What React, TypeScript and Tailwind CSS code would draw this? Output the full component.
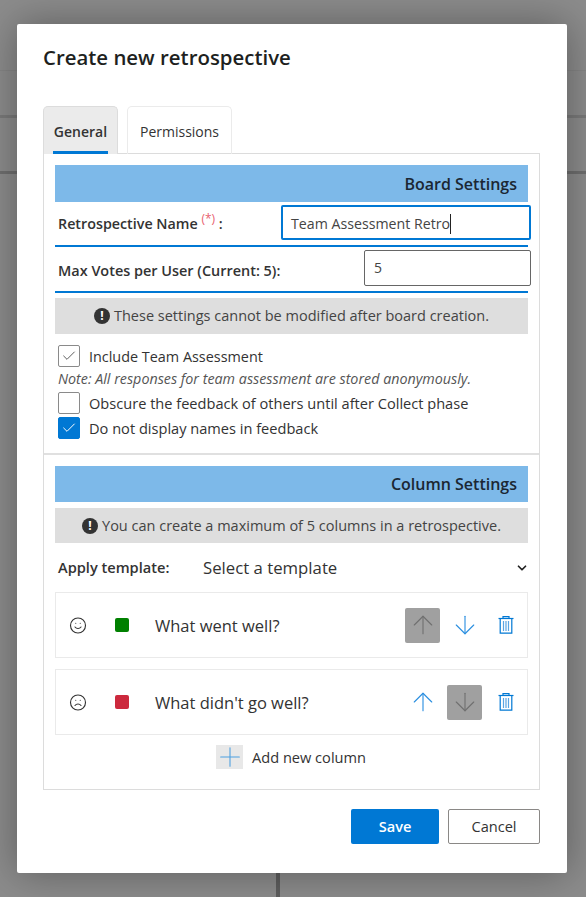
import React from 'react';
import { ArrowUp, ArrowDown, Check, Plus, ChevronDown, Smile, Frown } from 'lucide-react';

// Screenshot reference uses Segoe UI, Open Sans is the nearest installed family
const fontClass = "font-['Open_Sans','Noto_Sans',sans-serif]";

function SectionHeader({ title, heightClass }: { title: string; heightClass: string }) {
    return (
        <div className={`${heightClass} bg-[#7db9e9] flex items-center justify-end pr-[11px] text-[16px] font-semibold text-[#1b2733]`}>
            {title}
        </div>
    );
}

function InfoBar({ text, heightClass, textClass }: { text: string; heightClass: string; textClass?: string }) {
    return (
        <div className={`${heightClass} bg-[#dedede] flex items-center justify-center gap-[4px] text-[14.5px] text-[#444]`}>
            <span className="w-[16px] h-[16px] rounded-full bg-[#333] text-white text-[12px] font-bold flex items-center justify-center leading-none">!</span>
            <span className={textClass}>{text}</span>
        </div>
    );
}

function CheckBox({ state }: { state: 'off' | 'on' | 'outline' }) {
    const base = 'w-[22px] h-[22px] rounded-[2px] flex items-center justify-center border shrink-0';
    if (state === 'on') {
        return <span className={`${base} bg-[#0078d4] border-[#0078d4]`}><Check size={16} strokeWidth={1.5} color="#fff" /></span>;
    }
    return (
        <span className={`${base} bg-white border-[#8a8a8a]`}>
            {state === 'outline' && <Check size={16} strokeWidth={1.2} color="#333" />}
        </span>
    );
}

function TrashIcon() {
    return (
        <svg width="20" height="20" viewBox="0 0 20 20" fill="none" stroke="#0078d4" strokeWidth="1.2">
            <path d="M2.5 3.5H17.5" />
            <path d="M7 3.5V1.6H13V3.5" />
            <path d="M4.2 3.5V18.2H15.8V3.5" />
            <path d="M7.5 6V16M10 6V16M12.5 6V16" stroke="#5aa5e3" />
        </svg>
    );
}

function ColumnRow({ icon, color, label, upDisabled }: { icon: React.ReactNode; color: string; label: string; upDisabled: boolean }) {
    return (
        <div className="h-[66px] border border-[#eaeaea] flex items-center">
            <span className="ml-[13px] w-[18px] flex justify-center">{icon}</span>
            <span className="ml-[28px] w-[14px] h-[14px] rounded-[2px]" style={{ backgroundColor: color }} />
            <span className="ml-[26px] pt-[2px] text-[16.5px] text-[#333] flex-1">{label}</span>
            <div className="flex items-center mr-[4px]">
                <span className={`w-[35px] h-[35px] flex items-center justify-center rounded-[2px] ${upDisabled ? 'bg-[#a0a0a0] text-[#707070]' : 'text-[#2b8fe0]'}`}>
                    <ArrowUp size={30} strokeWidth={0.9} />
                </span>
                <span className={`ml-[7px] w-[35px] h-[35px] flex items-center justify-center rounded-[2px] ${upDisabled ? 'text-[#2b8fe0]' : 'bg-[#a0a0a0] text-[#707070]'}`}>
                    <ArrowDown size={30} strokeWidth={0.9} />
                </span>
                <span className="ml-[6px] w-[35px] h-[35px] flex items-center justify-center">
                    <TrashIcon />
                </span>
            </div>
        </div>
    );
}

export default function App() {
    return (
        <div className={`relative w-[586px] h-[897px] overflow-hidden bg-[#8c8c8c] ${fontClass}`}>
            <div className="absolute left-0 right-0 top-[70px] h-px bg-[#858585]" />
            <div className="absolute left-0 right-0 top-[115px] h-[3px] bg-[#7a7a7a]" />
            <div className="absolute left-0 right-0 top-[171px] h-[3px] bg-[#6f6f6f]" />
            <div className="absolute left-[276px] bottom-0 h-[30px] w-[4px] bg-[#5e5e5e]" />
            <div className="absolute left-[17px] top-[24px] w-[550px] h-[849px] bg-white rounded-[2px] shadow-[0_0_40px_rgba(0,0,0,0.35)] pl-[26px] pr-[27px] flex flex-col">
                <h1 className="mt-[18px] h-[30px] text-[20.4px] font-semibold text-[#201f1e] flex items-center">Create new retrospective</h1>

                <div className="relative mt-[34px] -mb-px flex gap-[9px] h-[48px] text-[14px]">
                    <div className="relative w-[75px] pt-[2px] bg-[#ebebeb] border border-b-0 border-[#dcdcdc] rounded-t-[5px] flex items-center justify-center font-semibold text-[#333]">
                        General
                        <span className="absolute left-[9px] right-[9px] bottom-0 h-[3px] bg-[#0078d4]" />
                    </div>
                    <div className="w-[105px] pt-[2px] border border-b-0 border-[#ebebeb] rounded-t-[5px] flex items-center justify-center text-[#333]">Permissions</div>
                </div>

                <div className="border border-[#dcdcdc] h-[637px] flex flex-col">
                    <div className="px-[11px] pt-[11px] h-[301px] border-b-2 border-[#e0e0e0] shrink-0">
                        <SectionHeader title="Board Settings" heightClass="h-[37px]" />
                        <div className="h-[45px] border-b-2 border-[#0078d4] flex items-center justify-between">
                            <span className="ml-[3px] text-[14.3px] font-semibold text-[#333]">Retrospective Name <sup className="text-[#e8606f] font-normal text-[12px]">(*)</sup> :</span>
                            <div className="w-[250px] h-[35px] border-2 border-[#0078d4] rounded-[2px] flex items-center pl-[8px] pt-[2px] text-[14.2px] text-[#444] -mt-[2px] -mr-[3px]">
                                Team Assessment Retro<span className="w-px h-[20px] bg-[#222]" />
                            </div>
                        </div>
                        <div className="h-[46px] border-b-2 border-[#0078d4] flex items-center justify-between">
                            <span className="ml-[3px] pt-[4px] text-[14.45px] font-semibold text-[#333]">Max Votes per User (Current: 5):</span>
                            <div className="w-[167px] h-[36px] border border-[#666] rounded-[2px] flex items-center pl-[9px] text-[14px] text-[#444] -mt-[3px] -mr-[3px]">5</div>
                        </div>
                        <div className="mt-[5px]"><InfoBar text="These settings cannot be modified after board creation." heightClass="h-[36px]" /></div>
                        <div className="mt-[11px] h-[22px] flex items-center gap-[9px] text-[14.4px] text-[#333] ml-[3px]">
                            <CheckBox state="outline" /> <span className="pt-[2px]">Include Team Assessment</span>
                        </div>
                        <div className="ml-[3px] h-[25px] pb-[2px] text-[14.3px] italic text-[#555] flex items-center">Note: All responses for team assessment are stored anonymously.</div>
                        <div className="h-[22px] flex items-center gap-[9px] text-[14.6px] text-[#333] ml-[3px]">
                            <CheckBox state="off" /> <span className="pt-[2px]">Obscure the feedback of others until after Collect phase</span>
                        </div>
                        <div className="mt-[3px] h-[22px] flex items-center gap-[9px] text-[14.6px] text-[#333] ml-[3px]">
                            <CheckBox state="on" /> <span className="pt-[2px]">Do not display names in feedback</span>
                        </div>
                    </div>
                    <div className="px-[11px] pt-[11px]">
                        <SectionHeader title="Column Settings" heightClass="h-[36px]" />
                        <div className="mt-[6px]"><InfoBar text="You can create a maximum of 5 columns in a retrospective." heightClass="h-[35px]" /></div>
                        <div className="mt-[8px] h-[34px] flex items-center text-[#333]">
                            <span className="ml-[3px] w-[145px] text-[14.6px] font-semibold">Apply template:</span>
                            <span className="flex-1 text-[16.75px]">Select a template</span>
                            <ChevronDown size={14} strokeWidth={3} color="#222" className="-mr-px" />
                        </div>
                        <div className="mt-[7px] flex flex-col gap-[11px]">
                            <ColumnRow icon={<Smile size={19} strokeWidth={1.5} color="#333" />} color="#008000" label="What went well?" upDisabled />
                            <ColumnRow icon={<Frown size={19} strokeWidth={1.5} color="#333" />} color="#cc293d" label="What didn't go well?" upDisabled={false} />
                        </div>
                        <div className="mt-[10px] flex items-center justify-center text-[14.6px] text-[#333] gap-[9px] pr-[1px]">
                            <span className="w-[27px] h-[24px] bg-[#e8e8e8] flex items-center justify-center"><Plus size={32} strokeWidth={0.8} color="#4d9fe0" className="shrink-0" /></span>
                            <span className="pt-[2px]">Add new column</span>
                        </div>
                    </div>
                </div>

                <div className="mt-[19px] flex justify-end gap-[9px] text-[14.6px]">
                    <button className="w-[88px] h-[35px] bg-[#0078d4] text-white font-semibold rounded-[2px]">Save</button>
                    <button className="w-[92px] h-[35px] border border-[#8a8886] rounded-[2px] text-[#333]">Cancel</button>
                </div>
            </div>
        </div>
    );
}
